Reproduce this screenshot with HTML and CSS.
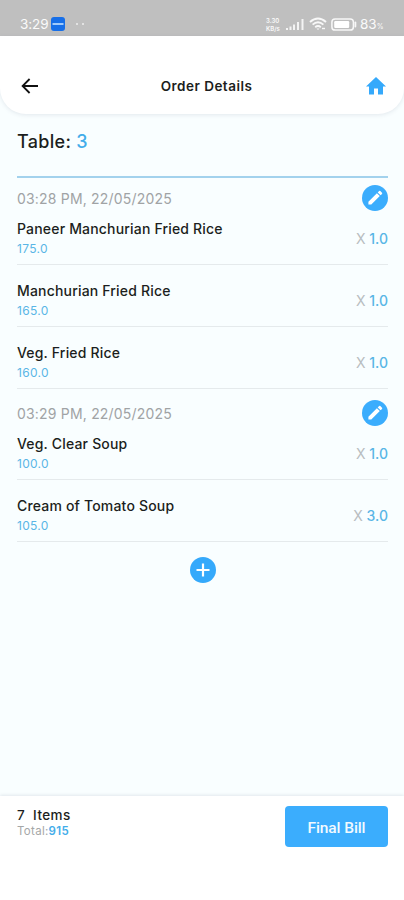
FILE: index.html
```html
<!DOCTYPE html>
<html lang="en">
<head>
<meta charset="utf-8">
<title>Order Details</title>
<link rel="stylesheet" href="styles.css">
</head>
<body>
<div class="status">
  <span class="clock">3:29</span>
  <svg class="app" width="14" height="14" viewBox="0 0 14 14"><rect width="14" height="14" rx="3" fill="#176fe8"/><path d="M1.5 7h11" stroke="#c5e2ff" stroke-width="1.6"/></svg>
  <span class="dots"><i></i><i></i></span>
  <span class="speed"><span>3.30</span><span>KB/s</span></span>
  <svg class="signal" width="20" height="13" viewBox="0 0 20 13" stroke="#f4f4f4" stroke-width="2"><path d="M2 10v2M5.5 8.5V12M9 6.5V12M13 4V12M17.5 1V12"/></svg>
  <svg class="wifi" width="18" height="14" viewBox="0 0 18 14" fill="none" stroke="#f8f8f8" stroke-width="1.9"><path d="M1 5Q9-2 17 5M3.6 7.6Q9 3 14.4 7.6M6.2 10.2Q9 8 11.8 10.2"/><path d="M7.5 11.5h3L9 13z" fill="#f8f8f8" stroke="none"/><path d="M13 11.5h3" stroke-width="1.4"/></svg>
  <svg class="battery" width="26" height="13" viewBox="0 0 26 13"><rect x=".9" y=".9" width="21.5" height="11.2" rx="3.2" fill="none" stroke="#f8f8f8" stroke-width="1.5"/><rect x="3.2" y="3" width="15" height="7" rx="1.2" fill="#fff"/><path d="M24.4 4.5v4" stroke="#f8f8f8" stroke-width="1.8" stroke-linecap="round"/></svg>
  <span class="pct">83<small>%</small></span>
</div>
<header class="header">
  <svg width="18" height="16" viewBox="0 0 18 16" fill="none" stroke="#111" stroke-width="1.8"><path d="M17 8H2M8.6 1 1.6 8l7 7"/></svg>
  <h1>Order Details</h1>
  <svg width="20" height="18" viewBox="0 0 20 18"><path d="M10 0 0 9.4h3V17.6h5V11.4h4V17.6h5V9.4h3z" fill="#35a9fb"/></svg>
</header>
<main class="main">
  <h2>Table: <b>3</b></h2>
  <section class="group">
    <div class="group-head"><time>03:28 PM, 22/05/2025</time>
      <svg width="26" height="26" viewBox="0 0 26 26"><circle cx="13" cy="13" r="13" fill="#3badfd"/><path d="M6.4 19.6v-2.9l8.5-8.5 2.9 2.9-8.5 8.5zM15.7 7.4l1.4-1.3q.6-.5 1.2 0l1.7 1.7q.5.6 0 1.2l-1.4 1.3z" fill="#fff"/></svg></div>
    <div class="item"><div><p class="name">Paneer Manchurian Fried Rice</p><p class="price">175.0</p></div><p class="qty"><span>X</span> 1.0</p></div>
    <div class="item"><div><p class="name">Manchurian Fried Rice</p><p class="price">165.0</p></div><p class="qty"><span>X</span> 1.0</p></div>
    <div class="item"><div><p class="name">Veg. Fried Rice</p><p class="price">160.0</p></div><p class="qty"><span>X</span> 1.0</p></div>
  </section>
  <section class="group second">
    <div class="group-head"><time>03:29 PM, 22/05/2025</time>
      <svg width="26" height="26" viewBox="0 0 26 26"><circle cx="13" cy="13" r="13" fill="#3badfd"/><path d="M6.4 19.6v-2.9l8.5-8.5 2.9 2.9-8.5 8.5zM15.7 7.4l1.4-1.3q.6-.5 1.2 0l1.7 1.7q.5.6 0 1.2l-1.4 1.3z" fill="#fff"/></svg></div>
    <div class="item"><div><p class="name">Veg. Clear Soup</p><p class="price">100.0</p></div><p class="qty"><span>X</span> 1.0</p></div>
    <div class="item"><div><p class="name">Cream of Tomato Soup</p><p class="price">105.0</p></div><p class="qty"><span>X</span> 3.0</p></div>
  </section>
  <svg class="add" width="26" height="26" viewBox="0 0 26 26"><circle cx="13" cy="13" r="13" fill="#35a9fb"/><path d="M13 6.5v13M6.5 13h13" stroke="#fff" stroke-width="2.2"/></svg>
</main>
<footer class="footer">
  <div><p class="count">7&nbsp; Items</p><p class="total">Total:<b>915</b></p></div>
  <button class="bill">Final Bill</button>
</footer>
</body>
</html>
```
FILE: styles.css
```css
* { box-sizing: border-box; }
body {
  margin: 0;
  width: 404px;
  height: 900px;
  display: flex;
  flex-direction: column;
  overflow: hidden;
  background: #f9feff;
  color: #1c1e20;
  font-family: Inter, "Liberation Sans", sans-serif;
}
h1, h2, p { margin: 0; }
svg { display: block; flex: none; }

.status {
  height: 36px;
  flex: none;
  display: flex;
  align-items: center;
  padding: 12px 21px 0 20px;
  background: #bfbfbf;
  color: #fafafa;
}
.clock { width: 28px; font-size: 13.5px; letter-spacing: -.1px; }
.app { margin-left: 3px; }
.dots { display: flex; gap: 4px; margin-left: 11px; }
.dots i { width: 2px; height: 2px; border-radius: 1px; background: #eee; }
.speed {
  margin-left: auto;
  display: flex;
  flex-direction: column;
  gap: 1px;
  width: 16px;
  font-size: 6px;
  line-height: 7px;
  font-weight: 600;
}
.signal { margin-left: 3px; }
.wifi { margin-left: 4px; }
.battery { margin-left: 4px; }
.pct { margin-left: 3px; width: 23px; font-size: 13.5px; white-space: nowrap; }
.pct small { font-size: 7px; }

.header {
  height: 78px;
  flex: none;
  display: flex;
  align-items: center;
  justify-content: space-between;
  padding: 21px 18px 0 21px;
  background: #fff;
  border-radius: 0 0 26px 26px;
  box-shadow: 0 1px 4px rgba(90, 100, 130, .14);
}
.header h1 { padding-left: 8px; font-size: 13.5px; line-height: 18px; font-weight: 600; letter-spacing: .48px; }

.main { flex: 1; padding: 0 16px 0 17px; }
h2 {
  height: 64px;
  padding-top: 16px;
  border-bottom: 2px solid #a3d2ed;
  font-size: 18px;
  line-height: 24px;
  font-weight: 500;
  letter-spacing: .3px;
}
h2 b { color: #43adea; font-weight: 500; }
.group-head {
  display: flex;
  align-items: center;
  justify-content: space-between;
  height: 26px;
  margin-top: 7px;
}
.second .group-head { margin-top: 11px; }
time { color: #a0a3a5; font-size: 14px; line-height: 18px; padding-top: 1px; letter-spacing: .19px; }
.item {
  display: flex;
  align-items: center;
  justify-content: space-between;
  height: 62px;
  padding-top: 10px;
  border-bottom: 1px solid #e5eaec;
}
.group-head + .item { height: 54px; padding-top: 2px; }
.name { font-size: 14px; line-height: 20px; font-weight: 500; letter-spacing: .18px; }
.price { color: #59b6e6; font-size: 12px; line-height: 20px; letter-spacing: .3px; }
.qty { color: #59b6e6; font-size: 14px; line-height: 20px; font-weight: 500; }
.qty span { color: #b8bdbf; font-weight: 400; }
.add { margin: 15px auto 0; }

.footer {
  height: 104px;
  flex: none;
  display: flex;
  justify-content: space-between;
  padding: 10px 16px 0 17px;
  background: #fff;
  box-shadow: 0 -1px 3px rgba(90, 100, 130, .14);
}
.count { font-size: 13.5px; line-height: 18px; font-weight: 500; letter-spacing: .4px; }
.total { color: #a5a7a8; font-size: 11.5px; line-height: 15px; letter-spacing: .3px; }
.total b { color: #43adea; font-weight: 600; }
.bill {
  width: 103px;
  height: 41px;
  padding: 2px 0 0;
  border: 0;
  border-radius: 4px;
  background: #3badfd;
  color: #f2faff;
  font: 500 15.5px/20px Roboto, sans-serif;
  letter-spacing: -.1px;
}
```
